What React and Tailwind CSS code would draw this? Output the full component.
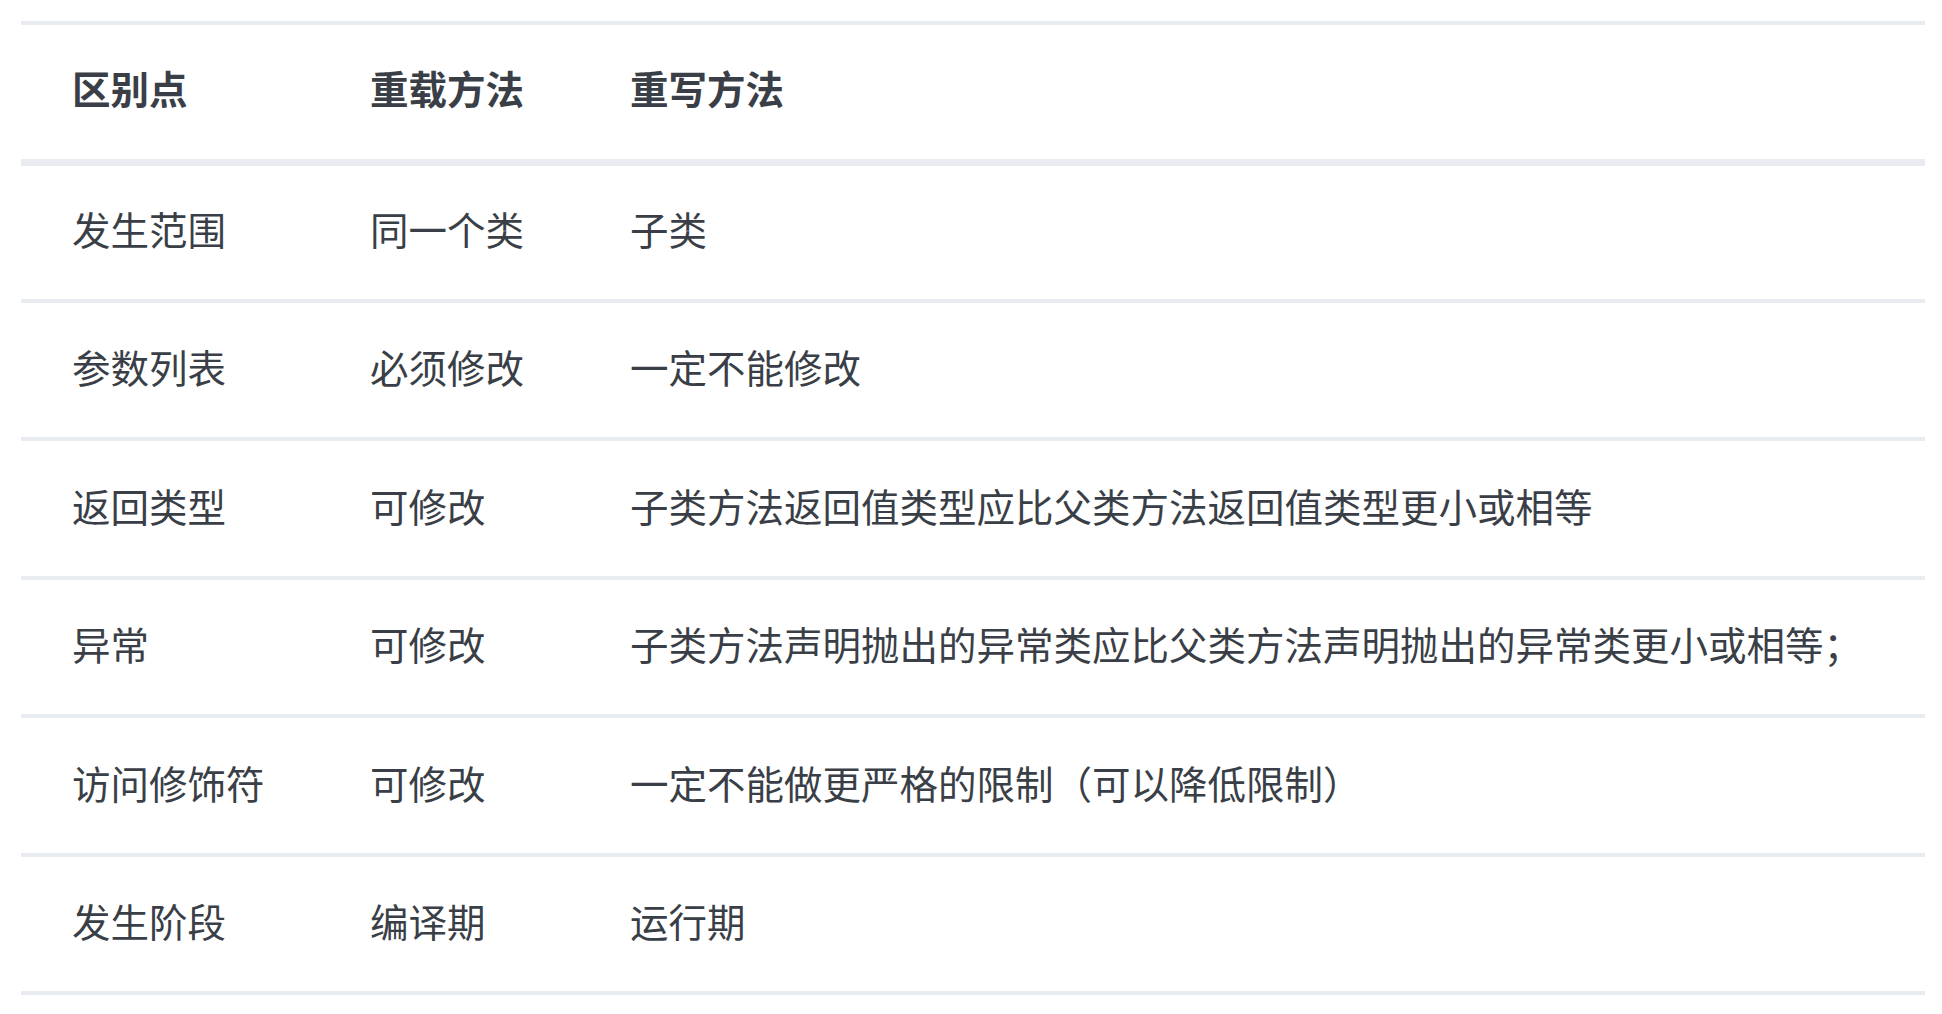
export default function App() {
  const rows = [
    ["发生范围", "同一个类", "子类"],
    ["参数列表", "必须修改", "一定不能修改"],
    ["返回类型", "可修改", "子类方法返回值类型应比父类方法返回值类型更小或相等"],
    ["异常", "可修改", "子类方法声明抛出的异常类应比父类方法声明抛出的异常类更小或相等；"],
    ["访问修饰符", "可修改", "一定不能做更严格的限制（可以降低限制）"],
    ["发生阶段", "编译期", "运行期"],
  ];
  const font = { fontFamily: '"Noto Sans CJK SC", "Noto Sans", sans-serif' };
  return (
    <div className="w-[1942px] h-[1014px] bg-white overflow-hidden pt-[21px] pl-[21px]" style={font}>
      <table className="w-[1904px] table-fixed border-collapse text-[38.5px] leading-none text-[#3a3f47]">
        <colgroup>
          <col className="w-[298px]" />
          <col className="w-[260px]" />
          <col />
        </colgroup>
        <thead>
          <tr className="border-t-[4px] border-b-[7px] border-[#e8ebf0]">
            <th className="h-[139px] pl-[51px] pb-[9px] text-left font-bold align-middle">区别点</th>
            <th className="h-[139px] pl-[51px] pb-[9px] text-left font-bold align-middle">重载方法</th>
            <th className="h-[139px] pl-[51px] pb-[9px] text-left font-bold align-middle">重写方法</th>
          </tr>
        </thead>
        <tbody>
          {rows.map((r, i) => (
            <tr key={i} className="border-b-[4px] border-[#e8ebf0]">
              <td className="h-[138.5px] pl-[51px] pb-[7px] align-middle whitespace-nowrap">{r[0]}</td>
              <td className="h-[138.5px] pl-[51px] pb-[7px] align-middle whitespace-nowrap">{r[1]}</td>
              <td className="h-[138.5px] pl-[51px] pb-[7px] align-middle whitespace-nowrap">{r[2]}</td>
            </tr>
          ))}
        </tbody>
      </table>
    </div>
  );
}
